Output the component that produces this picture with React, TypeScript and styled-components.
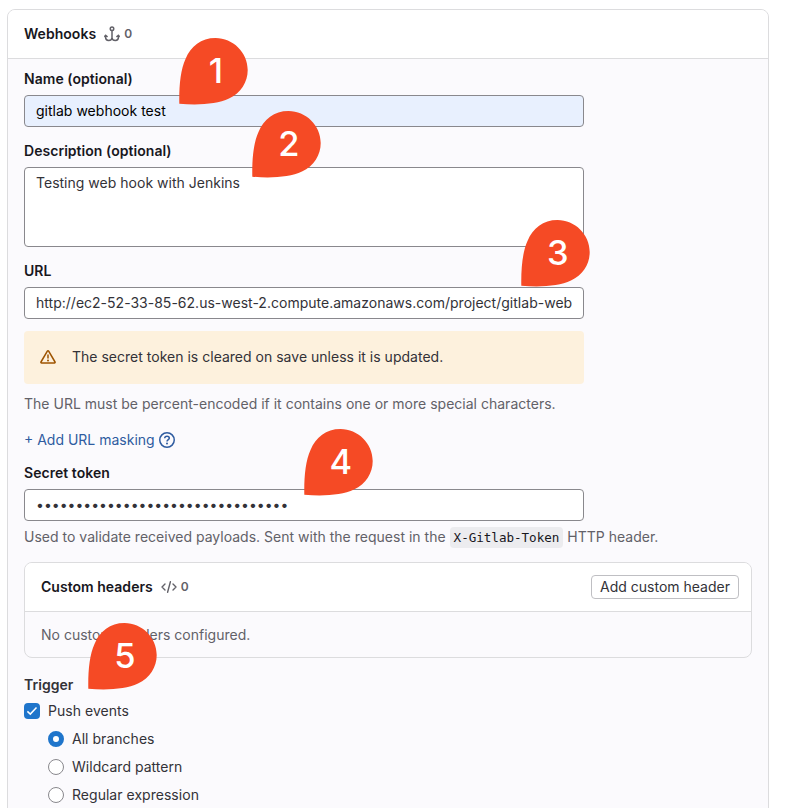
import React from 'react';
import styled, { createGlobalStyle } from 'styled-components';

const GlobalStyle = createGlobalStyle`
  *, *::before, *::after { box-sizing: border-box; }
  html, body { margin: 0; background: #fff; height: 808px; overflow: hidden; }
  body {
    font: 400 14px/20px Inter, "Liberation Sans", sans-serif;
    color: #333238;
    -webkit-font-smoothing: antialiased;
  }
`;

const Page = styled.main`
  position: relative;
  width: 785px;
  height: 808px;
  overflow: hidden;
  padding: 9px 0 0 7px;
`;

const Panel = styled.section`
  width: 762px;
  height: 850px;
  border: 1px solid #dcdcde;
  border-radius: 8px;
  background: #fbfafd;
  overflow: hidden;
`;

const PanelHeader = styled.header`
  display: flex;
  align-items: center;
  height: 49px;
  padding: 0 16px;
  border-bottom: 1px solid #dcdcde;
  background: #fff;
`;

const Title = styled.h2`
  margin: 0;
  font-size: 14px;
  font-weight: 600;
  color: #18171d;
  letter-spacing: 0.03px;
`;

const Counter = styled.span`
  display: flex;
  align-items: center;
  gap: 4px;
  margin-left: 8px;
  font-size: 12px;
  font-weight: 600;
  color: #626168;
`;

const Form = styled.form`
  display: flex;
  flex-direction: column;
  padding: 10px 16px 0;
`;

const Field = styled.div<{ $gap?: number }>`
  display: flex;
  flex-direction: column;
  gap: 6px;
  margin-bottom: ${p => p.$gap ?? 14}px;
`;

const Label = styled.label`
  font-weight: 600;
  color: #18171d;
  letter-spacing: 0.04px;
`;

const GroupLabel = styled(Label)`
  color: #333238;
`;

const Input = styled.div<{ $filled?: boolean }>`
  width: 560px;
  height: 32px;
  padding: 5px 11px;
  border: 1px solid #89888d;
  border-radius: 4px;
  background: ${p => (p.$filled ? '#e8f0fe' : '#fff')};
  color: ${p => (p.$filled ? '#000' : '#333238')};
  letter-spacing: 0.012px;
  white-space: nowrap;
  overflow: hidden;
`;

const TextArea = styled(Input)`
  height: 80px;
`;

const Alert = styled.div`
  display: flex;
  align-items: flex-start;
  gap: 16px;
  width: 560px;
  height: 53px;
  margin-bottom: 10px;
  padding: 16px;
  border-radius: 4px;
  background: #fdf1dd;
  letter-spacing: 0.012px;
  svg { margin-top: 2px; }
`;

const Help = styled.p`
  margin: 0;
  color: #626168;
  white-space: nowrap;
  letter-spacing: 0.01px;
`;

const MaskingLink = styled.a`
  display: flex;
  align-items: center;
  gap: 4px;
  margin: 16px 0 13px;
  color: #2f5ca0;
`;

const Code = styled.code`
  display: inline-block;
  height: 21px;
  padding: 0 4px;
  border-radius: 4px;
  background: #ececef;
  color: #18171d;
  font: 12.6px/21px "DejaVu Sans Mono", "Liberation Mono", monospace;
  letter-spacing: -0.03px;
`;

const SubPanel = styled.section`
  width: 728px;
  height: 96px;
  margin: 14px 0 17px;
  border: 1px solid #dcdcde;
  border-radius: 8px;
  overflow: hidden;
`;

const SubHeader = styled(PanelHeader)`
  padding: 0 12px 0 16px;
`;

const Button = styled.button`
  height: 24px;
  width: 148px;
  margin-left: auto;
  padding: 0;
  border: 1px solid #bfbfc3;
  border-radius: 4px;
  background: #fff;
  color: #333238;
  font: inherit;
  line-height: 20px;
  white-space: nowrap;
`;

const Empty = styled.p`
  margin: 0;
  padding: 13px 16px;
  color: #626168;
`;

const Options = styled.div`
  display: flex;
  flex-direction: column;
  gap: 8px;
  margin-top: 6px;
  letter-spacing: 0.03px;
`;

const Option = styled.label<{ $nested?: boolean }>`
  display: flex;
  align-items: center;
  gap: 8px;
  height: 20px;
  padding-left: ${p => (p.$nested ? 24 : 0)}px;
`;

const Checkbox = styled.span`
  display: flex;
  width: 16px;
  height: 16px;
  border-radius: 4px;
  background: #1f75cb;
`;

const Radio = styled.span<{ $on?: boolean }>`
  width: 16px;
  height: 16px;
  border: ${p => (p.$on ? '5px solid #1f75cb' : '1px solid #89888d')};
  border-radius: 50%;
  background: #fff;
`;

const Pin = styled.svg<{ $x: number; $y: number }>`
  position: absolute;
  left: ${p => p.$x}px;
  top: ${p => p.$y}px;
  width: 69px;
  height: 67px;
  text {
    font: 450 34.500px Inter, sans-serif;
    fill: #fff;
    text-anchor: middle;
  }
`;

const AnchorIcon = () => (
  <svg width="16" height="16" viewBox="0 0 16 16" fill="none" stroke="#626168" strokeWidth="1.5" strokeLinecap="round" strokeLinejoin="round">
    <circle cx="8" cy="2.800" r="1.750" />
    <path d="M8 4.800v7.700M1.600 9.500v2c0 1.700 1.200 2.900 3 2.900 2 0 3.400-.9 3.400-2.700 0 1.800 1.400 2.700 3.400 2.700 1.800 0 3-1.200 3-2.900v-2M.8 10.500l.8-1.300 1.500 1.300M15.200 10.500l-.8-1.300-1.500 1.300" />
  </svg>
);

const CodeIcon = () => (
  <svg width="16" height="16" viewBox="0 0 16 16" fill="none" stroke="#626168" strokeWidth="1.400" strokeLinecap="round" strokeLinejoin="round">
    <path d="M4 5 1 8l3 3M12 5l3 3-3 3M9.400 2.800 6.600 13.200" />
  </svg>
);

const WarningIcon = () => (
  <svg width="16" height="16" viewBox="0 0 16 16" fill="none" stroke="#9e5400" strokeWidth="1.500" strokeLinejoin="round">
    <path d="M7.350 2.100.95 13c-.25.45.05 1 .6 1h12.900c.55 0 .85-.55.6-1L8.650 2.100a.75.75 0 0 0-1.300 0Z" />
    <path d="M8 5.500v4" />
    <circle cx="8" cy="11.500" r="1" fill="#9e5400" stroke="none" />
  </svg>
);

const QuestionIcon = () => (
  <svg width="16" height="16" viewBox="0 0 16 16" fill="none" stroke="#2f5ca0" strokeWidth="1.500">
    <circle cx="8" cy="8" r="7.250" />
    <path d="M5.700 6.300C5.800 5 6.700 4.300 8 4.300c1.400 0 2.300.8 2.300 1.900C10.300 7.600 8 7.800 8 9.600" />
    <circle cx="8" cy="11.500" r="1" fill="#2f5ca0" stroke="none" />
  </svg>
);

const pins = [
  { n: 1, x: 179, y: 38 },
  { n: 2, x: 252, y: 111 },
  { n: 3, x: 521, y: 220 },
  { n: 4, x: 304, y: 429 },
  { n: 5, x: 88, y: 623 },
];

export default function App() {
  return (
    <>
      <GlobalStyle />
      <Page>
        <Panel>
          <PanelHeader>
            <Title>Webhooks</Title>
            <Counter><AnchorIcon />0</Counter>
          </PanelHeader>
          <Form>
            <Field>
              <Label>Name (optional)</Label>
              <Input $filled>gitlab webhook test</Input>
            </Field>
            <Field>
              <Label>Description (optional)</Label>
              <TextArea>Testing web hook with Jenkins</TextArea>
            </Field>
            <Field $gap={12}>
              <Label>URL</Label>
              <Input>http://ec2-52-33-85-62.us-west-2.compute.amazonaws.com/project/gitlab-web</Input>
            </Field>
            <Alert>
              <WarningIcon />
              <span>The secret token is cleared on save unless it is updated.</span>
            </Alert>
            <Help>The URL must be percent-encoded if it contains one or more special characters.</Help>
            <MaskingLink>+ Add URL masking <QuestionIcon /></MaskingLink>
            <Field $gap={6}>
              <Label>Secret token</Label>
              <Input>{'•'.repeat(32)}</Input>
            </Field>
            <Help>
              Used to validate received payloads. Sent with the request in the <Code>X-Gitlab-Token</Code> HTTP header.
            </Help>
            <SubPanel>
              <SubHeader>
                <Title>Custom headers</Title>
                <Counter><CodeIcon />0</Counter>
                <Button type="button">Add custom header</Button>
              </SubHeader>
              <Empty>No custom headers configured.</Empty>
            </SubPanel>
            <GroupLabel>Trigger</GroupLabel>
            <Options>
              <Option>
                <Checkbox>
                  <svg width="16" height="16" viewBox="0 0 16 16" fill="none" stroke="#fff" strokeWidth="1.500">
                    <path d="m3.400 8.400 2.900 2.700 6.200-6.500" />
                  </svg>
                </Checkbox>
                Push events
              </Option>
              <Option $nested><Radio $on />All branches</Option>
              <Option $nested><Radio />Wildcard pattern</Option>
              <Option $nested><Radio />Regular expression</Option>
            </Options>
          </Form>
        </Panel>
        {pins.map(p => (
          <Pin key={p.n} $x={p.x} $y={p.y} viewBox="0 0 69 67">
            <path fill="#f54a25" d="M.3 65.700C0 48 1.500 32 6.500 21 12 8 22 0 36.500 0 54 0 68.700 14.500 68.700 32c0 12-6.700 23-18.700 28.500C38 66 20 67.500.3 65.700Z" />
            <text x="36.800" y="45">{p.n}</text>
          </Pin>
        ))}
      </Page>
    </>
  );
}
